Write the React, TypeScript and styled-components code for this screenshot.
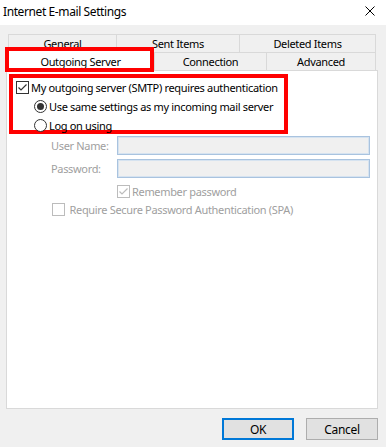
import React from "react";
import styled, { createGlobalStyle } from "styled-components";

const GlobalStyle = createGlobalStyle`
  html, body {
    margin: 0;
    padding: 0;
    background: #f0f0f0;
  }
  body {
    font-family: "Noto Sans", "Liberation Sans", sans-serif;
    font-size: 11px;
    letter-spacing: -0.33px;
    color: #000;
  }
`;

const DISABLED = "#a0a0a0";

const Window = styled.div`
  width: 386px;
  height: 447px;
  display: flex;
  flex-direction: column;
  background: #f0f0f0;
  overflow: hidden;
`;

const TitleBar = styled.div`
  height: 25px;
  flex: none;
  background: #fff;
  display: flex;
  align-items: center;
  justify-content: space-between;
  padding: 0 11px 3px 3px;
  box-sizing: border-box;
  font-size: 12px;
  letter-spacing: -0.4px;
`;

const CloseIcon = () => (
  <svg width="10" height="10" viewBox="0 0 10 10">
    <path d="M0.5 0.5 L9.5 9.5 M9.5 0.5 L0.5 9.5" stroke="#000" strokeWidth="1" />
  </svg>
);

const Tabs = styled.div`
  margin: 9px 9px 0 8px;
  display: flex;
  flex-direction: column;
`;

const TabRow = styled.div<{ $cols: string }>`
  display: grid;
  grid-template-columns: ${({ $cols }) => $cols};
  height: 18px;
`;

const Tab = styled.div<{ $last?: boolean }>`
  box-sizing: border-box;
  display: flex;
  align-items: center;
  justify-content: center;
  border-top: 1px solid #d9d9d9;
  border-left: 1px solid #d9d9d9;
  border-right: ${({ $last }) => ($last ? "1px solid #d9d9d9" : "none")};
  background: #f0f0f0;
  white-space: nowrap;
`;

const SelectedTab = styled.div`
  position: relative;
  z-index: 1;
  box-sizing: border-box;
  display: flex;
  align-items: center;
  justify-content: center;
  background: #fff;
  margin: -2px 0 -1px -1px;
  padding-top: 2px;

  /* red annotation drawn over the tab */
  &::after {
    content: "";
    position: absolute;
    left: -2px;
    right: 0;
    top: -3px;
    bottom: -1px;
    border: 4px solid #ff0000;
  }
`;

const Panel = styled.div`
  margin: 0 8px 0 6px;
  height: 339px;
  box-sizing: border-box;
  background: #fff;
  border: 1px solid #d9d9d9;
  padding: 3px 0 0 2px;
  display: flex;
  flex-direction: column;
`;

const Highlight = styled.div`
  width: 279px;
  box-sizing: border-box;
  border: 4px solid #ff0000;
  padding: 3px 0 0 3px;
  height: 60px;
  display: flex;
  flex-direction: column;
  gap: 6px;
`;

const OptionRow = styled.label<{ $indent?: number; $disabled?: boolean }>`
  display: flex;
  align-items: center;
  gap: 2px;
  height: 13px;
  padding-left: ${({ $indent }) => $indent ?? 0}px;
  color: ${({ $disabled }) => ($disabled ? DISABLED : "#000")};
  white-space: nowrap;
`;

const Box = styled.span<{ $disabled?: boolean }>`
  width: 13px;
  height: 13px;
  flex: none;
  box-sizing: border-box;
  border: 1px solid ${({ $disabled }) => ($disabled ? "#bcbcbc" : "#333")};
  background: #fff;
  display: flex;
  align-items: center;
  justify-content: center;
`;

const Round = styled.span<{ $checked?: boolean }>`
  width: 13px;
  height: 13px;
  flex: none;
  box-sizing: border-box;
  border: 1px solid #333;
  border-radius: 50%;
  background: #fff;
  display: flex;
  align-items: center;
  justify-content: center;

  &::after {
    content: "";
    width: 7px;
    height: 7px;
    border-radius: 50%;
    background: ${({ $checked }) => ($checked ? "#333" : "transparent")};
  }
`;

const CheckMark = ({ color }: { color: string }) => (
  <svg width="11" height="11" viewBox="0 0 11 11">
    <path d="M1.5 5.5 L4 8 L9.5 2.5" fill="none" stroke={color} strokeWidth="1.2" />
  </svg>
);

const Checkbox = ({ checked, disabled }: { checked?: boolean; disabled?: boolean }) => (
  <Box $disabled={disabled}>{checked && <CheckMark color={disabled ? "#bcbcbc" : "#333"} />}</Box>
);

const Form = styled.div`
  margin: 2px 0 0 42px;
  display: grid;
  grid-template-columns: 66px 253px;
  grid-auto-rows: 19px;
  row-gap: 4px;
  align-items: center;
`;

const FieldLabel = styled.span`
  color: ${DISABLED};
`;

const TextBox = styled.div`
  height: 19px;
  box-sizing: border-box;
  border: 1px solid #a9c3df;
  box-shadow: inset 0 0 0 1px #d6e3f0;
  background: #f0f0f0;
`;

const FormOptions = styled.div`
  display: flex;
  flex-direction: column;
  gap: 5px;
  margin-top: 7px;
`;

const Footer = styled.div`
  display: flex;
  justify-content: flex-end;
  gap: 12px;
  margin: 9px 8px 0 0;
`;

const Button = styled.button<{ $primary?: boolean }>`
  width: 72px;
  height: 22px;
  box-sizing: border-box;
  background: #e1e1e1;
  border: ${({ $primary }) => ($primary ? "2px solid #0078d7" : "1px solid #adadad")};
  font-family: inherit;
  font-size: 12px;
  letter-spacing: -0.3px;
  color: #000;
  padding: 0;
`;

export default function App() {
  return (
    <>
      <GlobalStyle />
      <Window>
        <TitleBar>
          <span>Internet E-mail Settings</span>
          <CloseIcon />
        </TitleBar>

        <Tabs>
          <TabRow $cols="108px 123px 137px">
            <Tab>General</Tab>
            <Tab>Sent Items</Tab>
            <Tab $last>Deleted Items</Tab>
          </TabRow>
          <TabRow $cols="146px 112px 110px">
            <SelectedTab>Outgoing Server</SelectedTab>
            <Tab>Connection</Tab>
            <Tab $last>Advanced</Tab>
          </TabRow>
        </Tabs>

        <Panel>
          <Highlight>
            <OptionRow>
              <Checkbox checked />
              My outgoing server (SMTP) requires authentication
            </OptionRow>
            <OptionRow $indent={18}>
              <Round $checked />
              Use same settings as my incoming mail server
            </OptionRow>
            <OptionRow $indent={18}>
              <Round />
              Log on using
            </OptionRow>
          </Highlight>

          <Form>
            <FieldLabel>User Name:</FieldLabel>
            <TextBox />
            <FieldLabel>Password:</FieldLabel>
            <TextBox />
          </Form>

          <FormOptions>
            <OptionRow $indent={108} $disabled>
              <Checkbox checked disabled />
              Remember password
            </OptionRow>
            <OptionRow $indent={43} $disabled>
              <Checkbox disabled />
              &nbsp;Require Secure Password Authentication (SPA)
            </OptionRow>
          </FormOptions>
        </Panel>

        <Footer>
          <Button $primary>OK</Button>
          <Button>Cancel</Button>
        </Footer>
      </Window>
    </>
  );
}
